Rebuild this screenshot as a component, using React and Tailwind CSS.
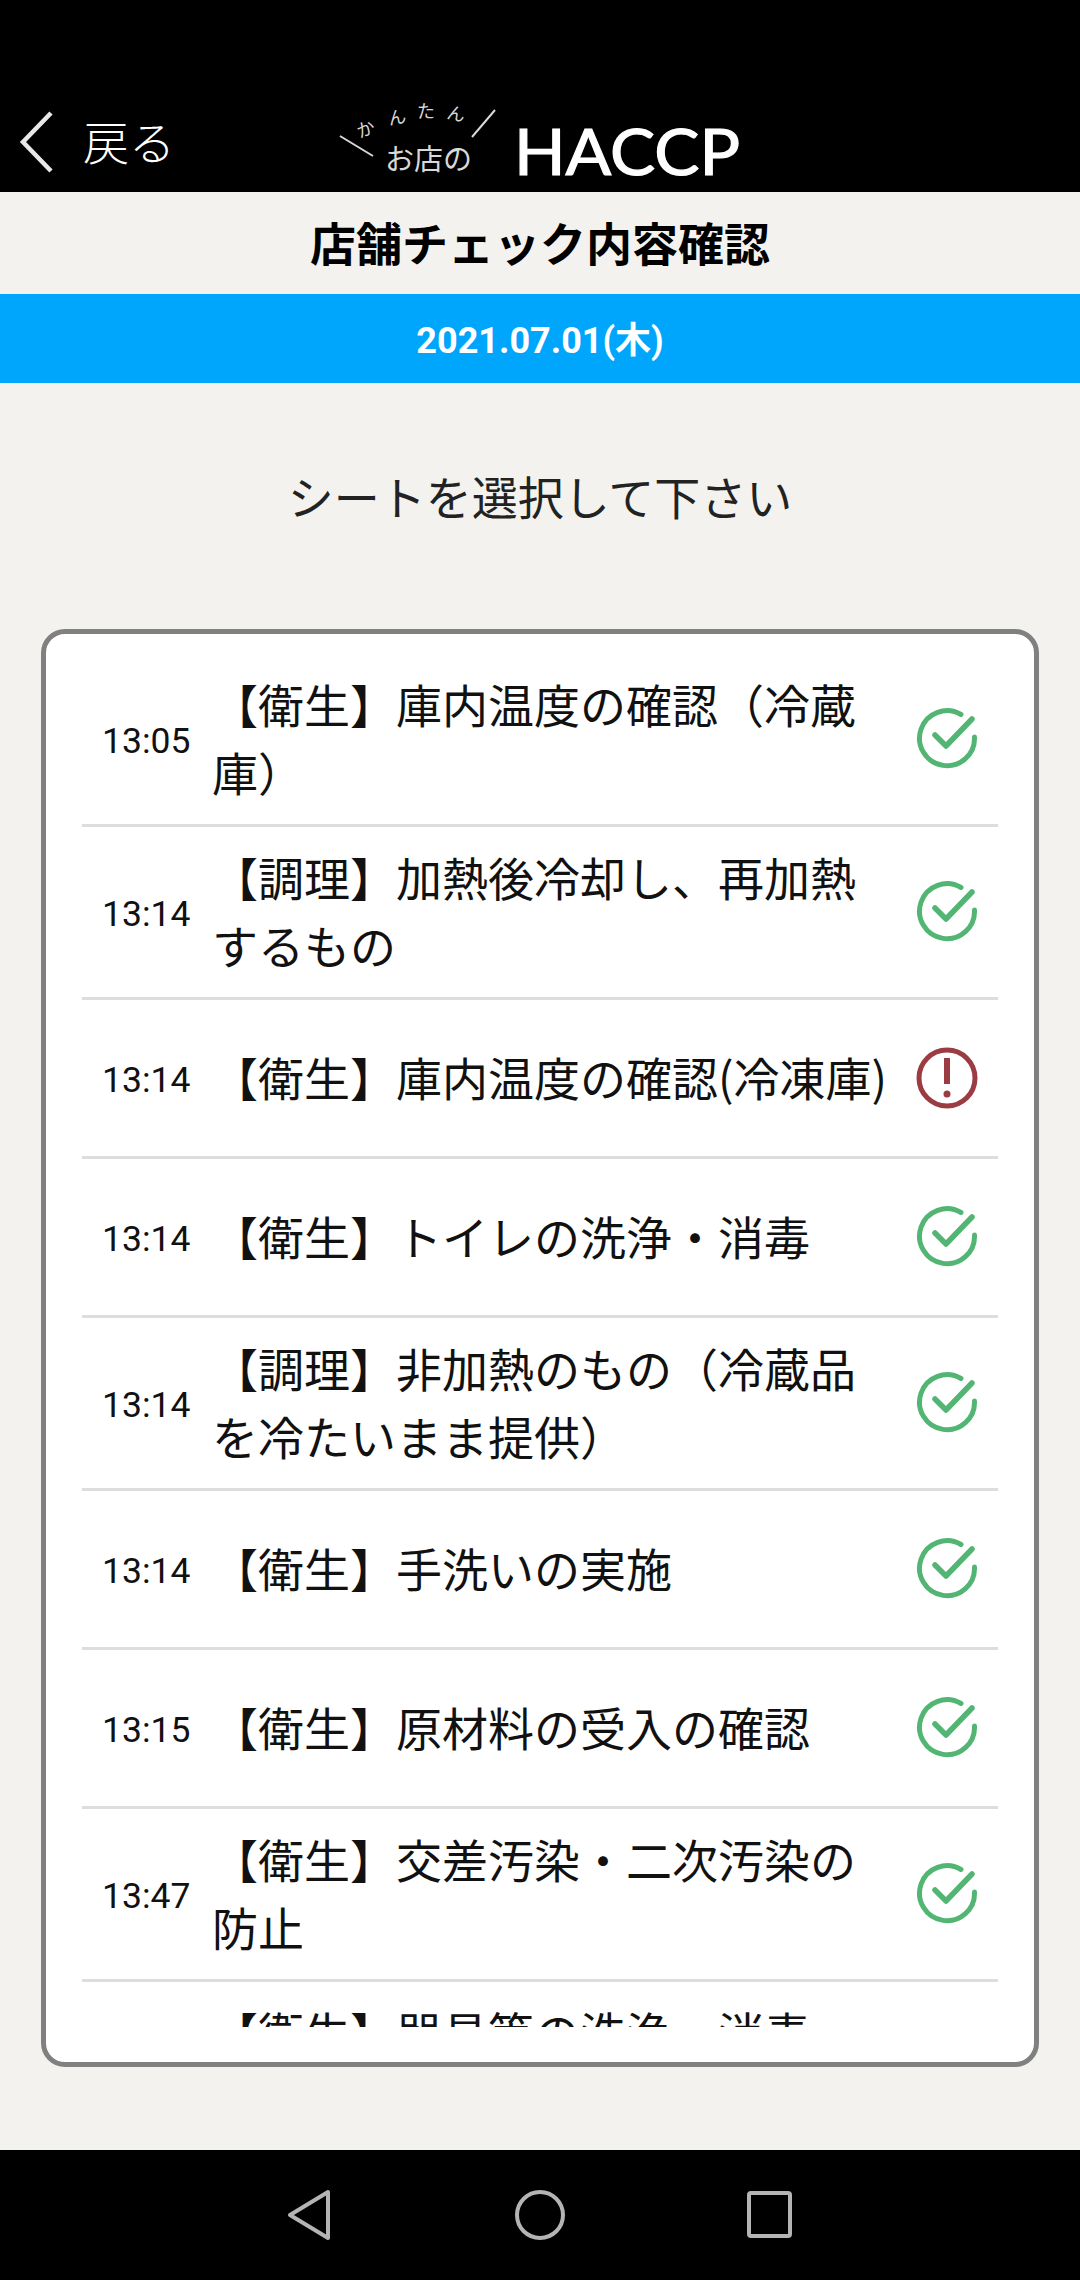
const sheets = [
  { time: "13:05", title: "【衛生】庫内温度の確認（冷蔵庫）" },
  { time: "13:14", title: "【調理】加熱後冷却し、再加熱するもの" },
  { time: "13:14", title: "【衛生】庫内温度の確認(冷凍庫)", alert: true },
  { time: "13:14", title: "【衛生】トイレの洗浄・消毒" },
  { time: "13:14", title: "【調理】非加熱のもの（冷蔵品を冷たいまま提供）" },
  { time: "13:14", title: "【衛生】手洗いの実施" },
  { time: "13:15", title: "【衛生】原材料の受入の確認" },
  { time: "13:47", title: "【衛生】交差汚染・二次汚染の防止" },
  { time: "13:47", title: "【衛生】器具等の洗浄・消毒\n\u00a0" },
];

function CheckIcon() {
  return (
    <svg width="62" height="62" viewBox="0 0 62 62" fill="none" stroke="#53b573" strokeWidth="5" strokeLinecap="round" strokeLinejoin="round">
      <path d="M45 6.5A27.5 27.5 0 1 0 58.5 29" />
      <path d="M19 27L30 38L56 11" strokeWidth="5.5" />
    </svg>
  );
}

function AlertIcon() {
  return (
    <svg width="62" height="62" viewBox="0 0 62 62" fill="none" stroke="#9b3c42" strokeWidth="5">
      <circle cx="31" cy="31" r="28" />
      <path d="M31 11L31 37" strokeWidth="6" />
      <circle cx="31" cy="47" r="3.5" fill="#9b3c42" stroke="none" />
    </svg>
  );
}

function Logo() {
  return (
    <svg width="420" height="100" viewBox="0 0 420 100" fill="none" className="ml-[153px]">
      <path d="M12 44L45 64M167 18L144 45" stroke="#d8d8d8" strokeWidth="2" />
      <g fill="#d8d8d8" fontSize="18" fontFamily="'Noto Sans CJK JP'">
        <text x="29" y="44" transform="rotate(-20 37 38)">か</text>
        <text x="60" y="32" transform="rotate(-10 68 26)">ん</text>
        <text x="89" y="26">た</text>
        <text x="119" y="28" transform="rotate(12 127 22)">ん</text>
      </g>
      <text x="57" y="78" fill="#d8d8d8" fontSize="29" fontFamily="'Noto Sans CJK JP'">お店の</text>
      <text x="186" y="83" fill="#ffffff" stroke="#ffffff" strokeWidth="1.2" fontSize="63" fontFamily="Lato" textLength="226" lengthAdjust="spacingAndGlyphs">HACCP</text>
    </svg>
  );
}

function Row({ sheet, last }) {
  return (
    <div className={`flex items-center min-h-[159px] mx-[36px] pt-[15px] pb-[19px] pl-5 ${last ? "" : "border-b-[3px] border-[#dddddd]"}`}>
      <span className="w-[110px] shrink-0 pt-[10px] text-[35.5px] leading-none text-[#111111] font-['Roboto',sans-serif]">{sheet.time}</span>
      <p className="w-[684px] shrink-0 text-[46px] leading-[68px] text-[#111111] whitespace-pre-line">{sheet.title}</p>
      <span className="ml-[20px] pt-1 shrink-0">{sheet.alert ? <AlertIcon /> : <CheckIcon />}</span>
    </div>
  );
}

export default function App() {
  return (
    <div className="w-[1080px] h-[2280px] flex flex-col bg-[#f3f2ef] font-['Noto_Sans_CJK_JP',sans-serif]">
      <header className="h-[192px] bg-black flex items-end text-white">
        <svg width="40" height="64" viewBox="0 0 40 64" fill="none" stroke="#e8e8e8" strokeWidth="4.5" className="ml-[16px] mb-[18px]">
          <path d="M35 3L7 32L35 61" />
        </svg>
        <span className="ml-[27px] mb-[24px] text-[46px] leading-[56px] font-light">戻る</span>
        <Logo />
      </header>

      <h1 className="h-[102px] pb-1 flex items-center justify-center text-[46px] font-bold text-black">店舗チェック内容確認</h1>
      <div className="h-[89px] pt-1 bg-[#00a6fb] flex items-center justify-center text-white text-[36px] font-bold font-['Roboto','Noto_Sans_CJK_JP',sans-serif]">2021.07.01(木)</div>

      <p className="h-[246px] pt-[78px] text-center text-[46px] leading-[68px] text-[#222222]">シートを選択して下さい</p>

      <div className="mx-[41px] h-[1438px] border-[5px] border-[#808080] rounded-[24px] bg-white pt-[20px] pb-[35px] box-border">
        <div className="h-full overflow-hidden">
          {sheets.map((sheet, i) => (
            <Row key={i} sheet={sheet} last={i === sheets.length - 1} />
          ))}
        </div>
      </div>

      <nav className="mt-auto h-[130px] bg-black flex items-center justify-center">
        <svg width="560" height="60" viewBox="0 0 560 60" fill="none" stroke="#b4b4b4" strokeWidth="4" strokeLinejoin="round">
          <path d="M68 7L68 53L30 30Z" />
          <circle cx="280" cy="30" r="23" />
          <rect x="489" y="8" width="41" height="43" rx="2" />
        </svg>
      </nav>
    </div>
  );
}
